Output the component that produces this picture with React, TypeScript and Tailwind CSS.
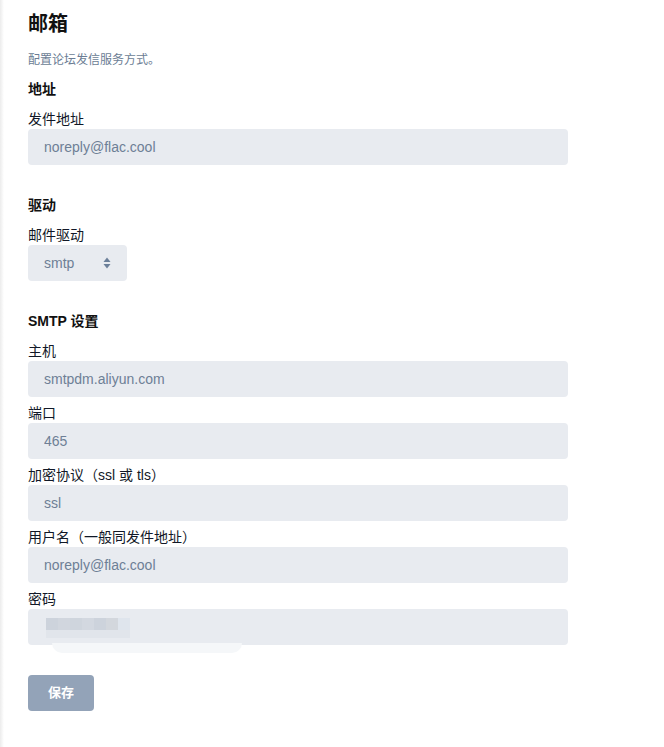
import React from "react";

const font = { fontFamily: '"Liberation Sans", "Noto Sans CJK SC", sans-serif' };

interface FieldProps {
  label: string;
  value: string;
}

const Field = ({ label, value }: FieldProps) => (
  <div className="flex flex-col">
    <label className="text-[14px] leading-5 text-[#111827]">{label}</label>
    <input
      readOnly
      value={value}
      className="w-[540px] h-9 rounded bg-[#e8ebf0] px-4 text-[14px] text-[#6e7f96] outline-none"
      style={font}
    />
  </div>
);

const App = () => {
  return (
    <div className="flex min-h-[747px] bg-white" style={font}>
      <div className="w-[4px] bg-gradient-to-r from-[#ececec] to-white" />
      <div className="flex flex-col pl-6 pt-[10px]">
        <h1 className="text-[20px] leading-7 font-bold text-[#111]">邮箱</h1>
        <p className="mt-[13px] text-[12px] leading-[18px] text-[#6b7d94]">配置论坛发信服务方式。</p>

        <h2 className="mt-[10px] text-[14px] leading-5 font-bold text-[#111]">地址</h2>
        <div className="mt-[10px]">
          <Field label="发件地址" value="noreply@flac.cool" />
        </div>

        <h2 className="mt-[30px] text-[14px] leading-5 font-bold text-[#111]">驱动</h2>
        <div className="mt-[10px] flex flex-col">
          <label className="text-[14px] leading-5 text-[#111827]">邮件驱动</label>
          <div className="w-[99px] h-9 rounded bg-[#e8ebf0] pl-4 pr-4 flex items-center justify-between text-[14px] text-[#6e7f96]">
            <span>smtp</span>
            <svg width="8" height="12" viewBox="0 0 8 12" fill="#6b7f99">
              <path d="M4 0.5 L7.5 5 L0.5 5 Z" />
              <path d="M4 11.5 L7.5 7 L0.5 7 Z" />
            </svg>
          </div>
        </div>

        <h2 className="mt-[30px] text-[14px] leading-5 font-bold text-[#111]">SMTP 设置</h2>
        <div className="mt-[10px] flex flex-col gap-[6px]">
          <Field label="主机" value="smtpdm.aliyun.com" />
          <Field label="端口" value="465" />
          <Field label="加密协议（ssl 或 tls）" value="ssl" />
          <Field label="用户名（一般同发件地址）" value="noreply@flac.cool" />
          <div className="flex flex-col">
            <label className="text-[14px] leading-5 text-[#111827]">密码</label>
            <div className="relative w-[540px] h-9 rounded bg-[#e8ebf0]">
              <div className="absolute left-[18px] top-[9px] flex">
                <div className="w-[12px] h-[12px] bg-[#cdd3dc]" />
                <div className="w-[12px] h-[12px] bg-[#d1d6de]" />
                <div className="w-[12px] h-[12px] bg-[#cfd5dd]" />
                <div className="w-[12px] h-[12px] bg-[#d3d8e0]" />
                <div className="w-[12px] h-[12px] bg-[#cdd3dc]" />
                <div className="w-[12px] h-[12px] bg-[#d3d7dd]" />
                <div className="w-[12px] h-[12px] bg-[#dfe5ed]" />
              </div>
              <div className="absolute left-[18px] top-[21px] flex">
                <div className="w-[84px] h-[8px] bg-[#e1e5eb]" />
              </div>
              <div className="absolute left-[24px] top-[34px] w-[190px] h-[10px] rounded-b-full bg-[#f5f7f9]" />
            </div>
          </div>
        </div>

        <button className="mt-[30px] w-[66px] h-9 rounded bg-[#93a3b8] text-white text-[13px] font-bold">
          保存
        </button>
      </div>
    </div>
  );
};

export default App;
